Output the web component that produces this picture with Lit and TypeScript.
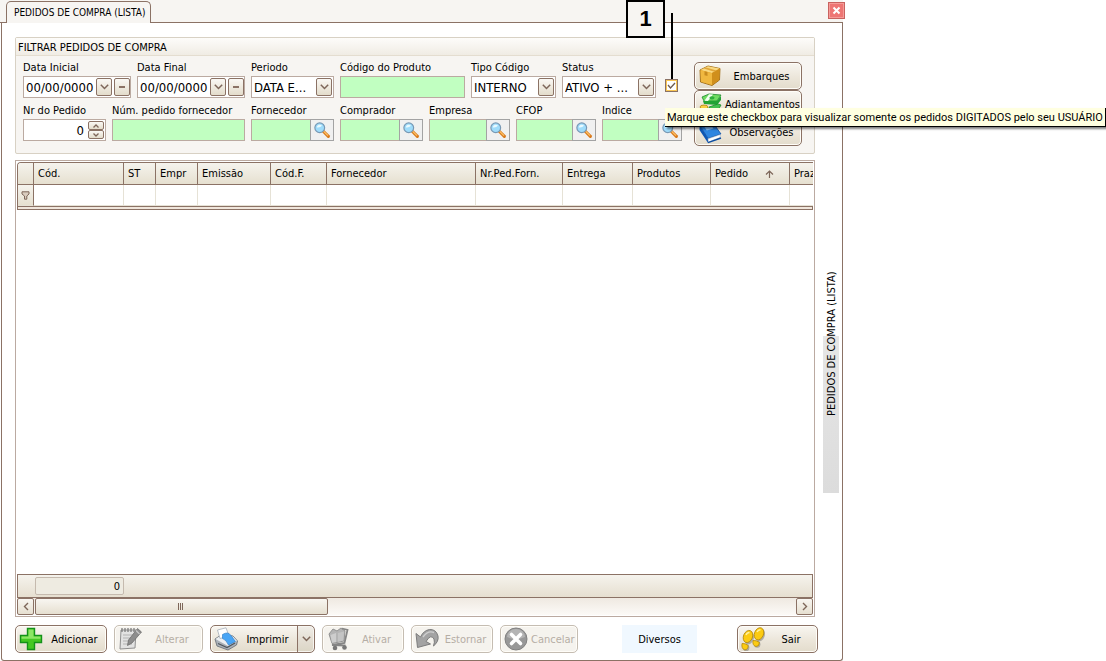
import { LitElement, html, css, svg } from "lit";
import { customElement, property } from "lit/decorators.js";

const icons: Record<string, unknown> = {
  box: svg`<path d="M2 6 L10 2 L22 4.500 L21.500 16 L14 21.500 L2.500 18Z" fill="#e3a12a" stroke="#9c6a14" stroke-width=".9"/><path d="M2.500 6 L10 2.300 L21.700 4.600 L14 9Z" fill="#f9d983"/><path d="M14 9 L21.700 4.600 L21.200 15.800 L14 21Z" fill="#d08f1c"/><path d="M2.500 6.300 L14 9.200 L14 21 L3 17.700Z" fill="#f0b840"/><path d="M5.700 4.500 L8 3.400 L18.500 6.400 L16.500 7.700Z" fill="#e0a63a"/><path d="M6.500 7.300 L9.500 8 L9.500 12 L6.500 11.200Z" fill="#c98c20"/>`,
  money: svg`<path d="M4 5 L11 2 L23 3 L19 9 L6 9Z" fill="#6fdc62" stroke="#1d8a2c" stroke-width=".8"/><path d="M5 9 L19 9 L23 4 L23 8 L19 13 L6 12Z" fill="#21a334"/><path d="M11 2.200 L15 2.500 L10 9 L6.500 8.800Z" fill="#f1fff0"/><ellipse cx="14" cy="5.800" rx="2.600" ry="1.600" fill="#2fae3d"/><path d="M11 15 L20 12 L23 13 L19 20 L12 20Z" fill="#43c24e" stroke="#1d8a2c" stroke-width=".8"/><g fill="#f9d040" stroke="#a9800f" stroke-width=".8"><ellipse cx="6" cy="20" rx="4" ry="2"/><ellipse cx="6" cy="17.500" rx="4" ry="2"/><ellipse cx="6" cy="15" rx="4" ry="2"/><ellipse cx="13" cy="21" rx="4" ry="2"/><ellipse cx="13" cy="18.500" rx="4" ry="2"/></g>`,
  book: svg`<path d="M1.500 5 L14 1.500 L23 14 L10 18.500Z" fill="#2f86e0" stroke="#0d4da0" stroke-width=".8"/><path d="M1.500 5 L10 18.500 L10 23 L1.500 10Z" fill="#0e57b4"/><path d="M10 18.800 L22.500 14.500 L22 17.500 L10.500 22Z" fill="#fff" stroke="#8fa6c4" stroke-width=".5"/><path d="M10 22.600 L23 18" stroke="#0d4da0" stroke-width="1.400"/><path d="M6.500 7 L13 5.200 L15.500 8.500 L8.800 10.500Z" fill="#8cc4fb"/>`,
  plus: svg`<path d="M8.500 1.500h7v7h7v7h-7v7h-7v-7h-7v-7h7z" fill="#45c823" stroke="#14911a" stroke-width="1.400"/><path d="M9.500 2.500h5v7h7v2.200H2.500V9.500h7z" fill="#a5f07c" opacity=".75"/>`,
  edit: svg`<path d="M3 3 L18 3 L17 21 L2 22Z" fill="#e2e2e2" stroke="#8f8f8f"/><path d="M4 1v4M7 1v4M10 1v4M13 1v4M16 1v4" stroke="#777" stroke-width="1.200"/><path d="M5 8h10M5 11h9M5 14h6M5 17h9" stroke="#b2b2b2"/><path d="M19.500 1.500 L23.500 5 L14 16 L9.500 18.500 L10.500 13Z" fill="#8d8d8d" stroke="#666" stroke-width=".7"/><path d="M18 3.500 L21.500 7" stroke="#c8c8c8" stroke-width="1.200"/>`,
  printer: svg`<path d="M1 12 L7 8 L19 9 L23.500 14 L22.500 18 L14 23 L3 19Z" fill="#aab1b9" stroke="#6e747b" stroke-width=".9"/><path d="M1.500 12 L7 8.500 L19 9.500 L23 14 L14 19Z" fill="#eceff2"/><path d="M3.500 3 L12 .8 L15 9 L6 11.500Z" fill="#fff" stroke="#a4adb8" stroke-width=".8"/><path d="M8.500 7.500 Q14 4 17 8.500 L21.500 14.500 L14.500 18 Q12 12.500 8.500 11.500Z" fill="#49a5f5" stroke="#2475c4" stroke-width=".6"/><path d="M4 16.500 L13 20.500 L21 16" fill="none" stroke="#50565c" stroke-width="1.200"/>`,
  cart: svg`<path d="M3 7 L7 2 L11 4 L15 1 L19 4 L18 14 L6 16.500Z" fill="#b4b4b4" stroke="#929292"/><path d="M4.500 8 L10 6 L10 15 L6 15.800Z" fill="#cdcdcd"/><path d="M12 6 L18 4.500 L17.300 13.500 L12 14.700Z" fill="#c4c4c4"/><path d="M16 1.500 L21.500 3 L18.500 16 L6 18 L19.500 18.500" fill="none" stroke="#858585" stroke-width="1.800"/><circle cx="9" cy="21" r="2.300" fill="#777"/><circle cx="18.500" cy="20.500" r="2.300" fill="#777"/>`,
  undo: svg`<path d="M1 6.500 L2.500 20.500 L15.500 17 L11 14.500 Q16 6.500 19 12 Q20 15 18.500 19 Q24 14.500 23 9 Q21 2 14.500 2.500 Q8.500 3.500 5.500 10Z" fill="#a3a3a3" stroke="#7c7c7c"/><path d="M8 10 Q13 3 19 5.500" fill="none" stroke="#cfcfcf" stroke-width="1.400"/>`,
  cancel: svg`<circle cx="12" cy="12" r="11" fill="#989898" stroke="#828282"/><path d="M3 10a9 8 0 0 1 18 0Q12 14 3 10" fill="#b4b4b4"/><path d="M7.500 7.500 16.500 16.500M16.500 7.500 7.500 16.500" stroke="#fff" stroke-width="3.600" stroke-linecap="round"/>`,
  feet: svg`<g fill="#666" opacity=".45" transform="translate(1.200 1.200)"><ellipse cx="7" cy="10" rx="4.500" ry="6.500" transform="rotate(22 7 10)"/><ellipse cx="18" cy="7" rx="4.500" ry="6.500" transform="rotate(22 18 7)"/><ellipse cx="4" cy="19.500" rx="3.200" ry="3.500"/><ellipse cx="15" cy="16" rx="3.200" ry="3.500"/></g><g fill="#fccb12" stroke="#b58a0a" stroke-width=".8"><ellipse cx="7" cy="9.500" rx="4.500" ry="6.300" transform="rotate(22 7 9.500)"/><ellipse cx="18" cy="6.800" rx="4.500" ry="6.300" transform="rotate(22 18 6.800)"/><path d="M1 16.500 Q4 16 7.200 18.500 Q7 22.800 3.800 22.800 Q.2 22 1 16.500Z"/><path d="M12 13.500 Q15 13 18.500 15.500 Q18.200 19.500 15 19.500 Q11.200 18.500 12 13.500Z"/></g><path d="M5 8 Q6 5.500 8.500 5.500M16 5 Q17 2.800 19.500 2.800" fill="none" stroke="#fff1a0" stroke-width="1.500"/>`,
  lens: svg`<path d="M14 14 L20.500 20.500" stroke="#d97a1c" stroke-width="4.200" stroke-linecap="round"/><path d="M14 13.500 L20 19.500" stroke="#ffc46b" stroke-width="1.600"/><circle cx="9" cy="9" r="6.500" fill="#9fdcfb" stroke="#7898b4" stroke-width="1.600"/><path d="M5 8.500a4 4 0 0 1 7-2.200Q9 9.500 5 8.500" fill="#e8f9ff"/>`,
};

const icon = (name: string, size = 24) =>
  html`<svg class="icon" width=${size} height=${size} viewBox="0 0 24 24" aria-hidden="true">${icons[name]}</svg>`;

const chevron = html`<svg width="9" height="6" viewBox="0 0 9 6" aria-hidden="true"><path d="M.8.8 4.500 4.500 8.200.8" fill="none" stroke="#7d6659" stroke-width="1.500"/></svg>`;

const shared = css`
  *, *::before, *::after { box-sizing: border-box; }
  :host { font: 11px/13px Tahoma, "DejaVu Sans Condensed", "DejaVu Sans", sans-serif; color: #000; }
  button, input, select { font: inherit; color: inherit; margin: 0; border-radius: 0; }
  svg { display: block; flex: none; }
`;

@customElement("tool-button")
class ToolButton extends LitElement {
  @property() icon = "";
  @property() label = "";
  @property({ type: Boolean }) off = false;
  @property({ type: Boolean }) split = false;

  static styles = [shared, css`
    :host { display: block; min-width: 0; }
    .frame {
      display: flex; width: 100%; height: 28px; border: 1px solid #8b7265; border-radius: 5px;
      background: linear-gradient(#f8f6f1, #ece6da 55%, #e3dccc); box-shadow: inset 0 0 0 1px #fffdf8;
    }
    .main { flex: 1; min-width: 0; display: flex; align-items: center; padding: 0 3px; border: 0; background: none; }
    .text { flex: 1; text-align: center; white-space: nowrap; padding-left: 3px; }
    .more { width: 17px; padding: 0; border: 0; border-left: 1px solid #8b7265; background: #00000008; display: grid; place-items: center; }
    .off { border-color: #c5bdb2; background: #f5f3ee; }
    .off .text { color: #b5aea5; }
  `];

  render() {
    return html`<div class="frame ${this.off ? "off" : ""}">
      <button class="main" ?disabled=${this.off}>${icon(this.icon)}<span class="text">${this.label}</span></button>
      ${this.split ? html`<button class="more" aria-label="Mais opções">${chevron}</button>` : ""}
    </div>`;
  }
}

type Kind = "date" | "select" | "text" | "number" | "search";

@customElement("filter-field")
class FilterField extends LitElement {
  @property() label = "";
  @property() kind: Kind = "text";
  @property() value = "";

  static styles = [shared, css`
    :host { display: flex; flex-direction: column; gap: 2px; min-width: 0; }
    label { white-space: nowrap; }
    .box { display: flex; align-items: center; gap: 2px; height: 22px; border: 1px solid #bbaaa1; background: #fff; }
    .entry { flex: 1; width: 0; min-width: 0; height: 20px; border: 0; padding: 0 0 0 2px; background: none; outline: 0; font-size: 13px; }
    .green { background: #c1ffc1; }
    .number { text-align: right; padding-right: 2px; }
    .mini { width: 16px; height: 18px; padding: 0; display: grid; place-items: center; border: 1px solid #8b7265; border-radius: 2px; background: linear-gradient(#faf8f4, #e3dccb); }
    .minus::before { content: ""; width: 6px; height: 2px; background: #8b7265; }
    .pick { display: grid; grid-template-columns: minmax(0, 1fr) 16px; padding-right: 1px; }
    .pick select { grid-area: 1 / 1 / 2 / 3; width: 100%; appearance: none; }
    .pick .mini { grid-area: 1 / 2; pointer-events: none; }
    .spin { display: flex; flex-direction: column; padding-right: 1px; }
    .spin .mini { height: 9px; }
    .spin .up svg { transform: rotate(180deg); }
    .lens { align-self: stretch; width: 24px; margin: -1px; padding: 0; display: grid; place-items: center; border: 1px solid #a3a3a3; background: #f0f0f0; }
  `];

  private body() {
    const v = this.value;
    const small = html`<svg width="6" height="4" viewBox="0 0 6 4" aria-hidden="true"><path d="M.5.5 3 3 5.500.5" fill="none" stroke="#7d6659" stroke-width="1.300"/></svg>`;
    switch (this.kind) {
      case "date":
        return html`<div class="box"><input id="f" class="entry" .value=${v} />
          <button class="mini" aria-label="Abrir calendário">${chevron}</button>
          <button class="mini minus" aria-label="Limpar"></button></div>`;
      case "select":
        return html`<div class="box pick"><select id="f" class="entry"><option>${v}</option></select><span class="mini">${chevron}</span></div>`;
      case "number":
        return html`<div class="box"><input id="f" class="entry number" .value=${v} />
          <div class="spin"><button class="mini up" aria-label="Aumentar">${small}</button><button class="mini" aria-label="Diminuir">${small}</button></div></div>`;
      case "search":
        return html`<div class="box green"><input id="f" class="entry" /><button class="lens" aria-label="Pesquisar">${icon("lens", 18)}</button></div>`;
      default:
        return html`<div class="box green"><input id="f" class="entry" /></div>`;
    }
  }

  render() {
    return html`<label for="f">${this.label}</label>${this.body()}`;
  }
}

const columns: [string, number][] = [
  ["Cód.", 90], ["ST", 32], ["Empr", 42], ["Emissão", 73], ["Cód.F.", 56], ["Fornecedor", 149],
  ["Nr.Ped.Forn.", 87], ["Entrega", 70], ["Produtos", 78], ["Pedido", 79], ["Praz", 24],
];

@customElement("order-grid")
class OrderGrid extends LitElement {
  static styles = [shared, css`
    :host { flex: 1; display: flex; flex-direction: column; border: 1px solid #bbaaa1; padding: 1px; background: #fff; }
    table { width: 100%; table-layout: fixed; border-spacing: 0; border: 1px solid #8b7265; border-right: 0; border-bottom: 0; border-top-left-radius: 4px; }
    th, td { padding: 0; overflow: hidden; white-space: nowrap; text-align: left; font-weight: normal; }
    th { height: 22px; padding: 0 0 0 4px; border-right: 1px solid #8b7265; border-bottom: 1px solid #8b7265; background: linear-gradient(#f5f3ed, #e6e0d0); }
    td { height: 21px; border-right: 1px solid #e6e2d6; border-bottom: 1px solid #e6e2d6; }
    th:last-child, td:last-child { border-right: 0; }
    th:first-child { border-top-left-radius: 3px; }
    .mark { padding: 0 0 0 3px; border-right-color: #8b7265; background: linear-gradient(#f5f3ed, #e6e0d0); }
    .head { display: flex; justify-content: space-between; align-items: center; }
    .sort { margin-right: 15px; }
    .split { height: 4px; border: 1px solid #8b7265; background: #f0e6dc; }
    .rows { flex: 1; }
    .total { height: 24px; border: 1px solid #8b7265; padding: 2px 17px; background: linear-gradient(#f5f3ed, #e6dfd0); }
    .sum { display: block; width: 89px; height: 18px; border: 1px solid #c5baae; border-radius: 2px; padding: 2px 3px; text-align: right; background: #eeebe1; }
    .scroll { display: flex; gap: 1px; height: 17px; background: linear-gradient(#efe9e1, #fcfaf7); }
    .step, .thumb { padding: 0; display: grid; place-items: center; border: 1px solid #8b7265; border-radius: 2px; background: linear-gradient(#f8f6f1, #e6dfd0); }
    .step { width: 17px; }
    .thumb { width: 38.500%; }
    .track { flex: 1; display: flex; }
  `];

  render() {
    return html`
      <table>
        <colgroup><col style="width:16px" />${columns.map(([, w], i) => i < columns.length - 1 ? html`<col style="width:${w}px" />` : html`<col />`)}</colgroup>
        <thead><tr><th></th>${columns.map(([name]) => html`<th><div class="head">${name}${name === "Pedido"
          ? html`<svg class="sort" width="9" height="8" viewBox="0 0 9 8" aria-hidden="true"><path d="M4.500 8V1.500M1 4.500l3.500-3.500L8 4.500" fill="none" stroke="#7d6659" stroke-width="1.200"/></svg>` : ""}</div></th>`)}</tr></thead>
        <tbody><tr><td class="mark"><svg width="9" height="9" viewBox="0 0 9 9" aria-hidden="true"><path d="M1 .8h7v2.200L5.800 5v3.200H3.500V5L1 3z" fill="#d9ccbe" stroke="#7d6659"/></svg></td>${columns.map(() => html`<td></td>`)}</tr></tbody>
      </table>
      <div class="split"></div>
      <div class="rows"></div>
      <div class="total"><output class="sum">0</output></div>
      <div class="scroll">
        <button class="step" aria-label="Rolar para a esquerda"><svg width="6" height="9" viewBox="0 0 6 9"><path d="M5 1 1.500 4.500 5 8" fill="none" stroke="#7d6659" stroke-width="1.400"/></svg></button>
        <div class="track"><button class="thumb" aria-label="Barra de rolagem"><svg width="6" height="7" viewBox="0 0 6 7"><path d="M.5 0v7M2.500 0v7M4.500 0v7" stroke="#7d6659"/></svg></button></div>
        <button class="step" aria-label="Rolar para a direita"><svg width="6" height="9" viewBox="0 0 6 9"><path d="M1 1l3.500 3.500L1 8" fill="none" stroke="#7d6659" stroke-width="1.400"/></svg></button>
      </div>`;
  }
}

@customElement("app-root")
class AppRoot extends LitElement {
  static styles = [shared, css`
    :host { display: grid; grid-template-columns: minmax(0, 1fr) 263px; min-height: 100vh; background: #fff; }
    .window { display: flex; flex-direction: column; }
    .strip { display: flex; justify-content: space-between; height: 23px; padding: 1px 0 0 6px; background: #f7f5f2; box-shadow: inset 0 -1px #8b7265; }
    .tab { height: 22px; padding: 0 5px 0 7px; border: 1px solid #8b7265; border-bottom: 0; border-radius: 5px 5px 0 0; background: #f7f5f2; font-size: 10px; }
    .close { width: 17px; height: 17px; margin: 1px -2px 0 0; padding: 0; display: grid; place-items: center; border: 1px solid #c9625f; background: #ee7674; box-shadow: inset 0 0 0 1px #f59b98; }
    .body { flex: 1; display: grid; grid-template-columns: minmax(0, 1fr) 16px; gap: 8px; margin-left: 1px; padding: 14px 3px 7px 13px; border: 1px solid #8b7265; border-top: 0; border-radius: 0 0 3px 3px; }
    .main { display: flex; flex-direction: column; gap: 6px; }
    fieldset { margin: 0; padding: 0; min-width: 0; border: 1px solid #d8d1c4; border-radius: 2px; background: #f7f5f2; }
    .title { height: 18px; padding: 3px 2px 0; line-height: 13px; border-bottom: 1px solid #e4ddd0; background: linear-gradient(#fdfcfa, #f0ece4); }
    .filters { display: flex; gap: 12px; padding: 5px 12px 7px 7px; }
    .fields { flex: 1; min-width: 0; display: grid; gap: 6px; align-content: start; }
    .row { display: grid; gap: 6px; }
    .first { grid-template-columns: 108fr 108fr 83fr 125fr 85fr 94fr 20fr; }
    .second { grid-template-columns: 83fr 133fr 83fr 83fr 81fr 80fr 80fr; }
    .shortcuts { width: 108px; padding-top: 1px; }
    .check { align-self: end; padding: 0 0 6px 3px; }
    .anchor { position: relative; display: grid; width: 13px; height: 13px; }
    .anchor input, .tick { grid-area: 1 / 1; }
    .anchor input { width: 13px; height: 13px; appearance: none; border: 1px solid #8b7265; background: #fff; box-shadow: inset 0 0 0 1px #f9c655; }
    .tick { place-self: center; pointer-events: none; }
    .leader { position: absolute; left: 6px; bottom: 13px; width: 2px; height: 66px; background: #000; }
    .number { position: absolute; left: -39px; top: -79px; width: 39px; height: 38px; display: grid; place-items: center; border: 2px solid #000; background: #f7f5f2; font: bold 22px "Liberation Sans", sans-serif; }
    .tip { position: absolute; z-index: 5; left: 0; top: 29px; height: 19px; padding: 3px 2px 0; white-space: nowrap; background: #ffffe1; border: solid #000; border-width: 0 1px 1px 0; box-shadow: 2px 2px 2px #00000080; font-family: Tahoma, Roboto, sans-serif; }
    .actions { display: flex; gap: 7px; margin: 2px -3px 0 0; align-items: center; }
    .w92 { width: 92px; } .w89 { width: 89px; } .w105 { width: 105px; } .w82 { width: 82px; } .w78 { width: 78px; } .w81 { width: 81px; }
    .misc { margin: 0 33px 0 auto; width: 75px; height: 28px; border: 0; padding: 0; background: #f0f8ff; }
    .side { display: flex; flex-direction: column; align-items: center; padding-top: 74px; justify-content: center; }
    .rail { height: 222px; width: 16px; padding: 0; border: 0; writing-mode: vertical-rl; transform: rotate(180deg); text-align: right; white-space: nowrap; background: linear-gradient(#dcdcdc, #e6e6e6) no-repeat top / 100% 157px; }
  `];

  render() {
    return html`
      <div class="window">
        <header class="strip">
          <button class="tab">PEDIDOS DE COMPRA (LISTA)</button>
          <button class="close" aria-label="Fechar"><svg width="9" height="9" viewBox="0 0 9 9"><path d="M1.500 1.500l6 6M7.500 1.500l-6 6" stroke="#fff" stroke-width="2"/></svg></button>
        </header>
        <div class="body">
          <main class="main">
            <fieldset aria-labelledby="filter-title">
              <div class="title" id="filter-title">FILTRAR PEDIDOS DE COMPRA</div>
              <div class="filters">
                <div class="fields">
                  <div class="row first">
                    <filter-field label="Data Inicial" kind="date" value="00/00/0000"></filter-field>
                    <filter-field label="Data Final" kind="date" value="00/00/0000"></filter-field>
                    <filter-field label="Periodo" kind="select" value="DATA E..."></filter-field>
                    <filter-field label="Código do Produto"></filter-field>
                    <filter-field label="Tipo Código" kind="select" value="INTERNO"></filter-field>
                    <filter-field label="Status" kind="select" value="ATIVO + ..."></filter-field>
                    <div class="check"><div class="anchor">
                      <input type="checkbox" checked aria-labelledby="own-tip" />
                      <svg class="tick" width="9" height="9" viewBox="0 0 9 9" aria-hidden="true"><path d="M1 4l2.500 3L8 2" fill="none" stroke="#6b5a50" stroke-width="1.300"/></svg>
                      <span class="leader"></span>
                      <span class="number">1</span>
                      <span class="tip" id="own-tip" role="tooltip">Marque este checkbox para visualizar somente os pedidos DIGITADOS pelo seu USUÁRIO</span>
                    </div></div>
                  </div>
                  <div class="row second">
                    <filter-field label="Nr do Pedido" kind="number" value="0"></filter-field>
                    <filter-field label="Núm. pedido fornecedor"></filter-field>
                    ${["Fornecedor", "Comprador", "Empresa", "CFOP", "Indice"].map((l) => html`<filter-field label=${l} kind="search"></filter-field>`)}
                  </div>
                </div>
                <div class="shortcuts">
                  <tool-button icon="box" label="Embarques"></tool-button>
                  <tool-button icon="money" label="Adiantamentos"></tool-button>
                  <tool-button icon="book" label="Observações"></tool-button>
                </div>
              </div>
            </fieldset>
            <order-grid></order-grid>
            <footer class="actions">
              <tool-button class="w92" icon="plus" label="Adicionar"></tool-button>
              <tool-button class="w89" icon="edit" label="Alterar" off></tool-button>
              <tool-button class="w105" icon="printer" label="Imprimir" split></tool-button>
              <tool-button class="w82" icon="cart" label="Ativar" off></tool-button>
              <tool-button class="w82" icon="undo" label="Estornar" off></tool-button>
              <tool-button class="w78" icon="cancel" label="Cancelar" off></tool-button>
              <button class="misc">Diversos</button>
              <tool-button class="w81" icon="feet" label="Sair"></tool-button>
            </footer>
          </main>
          <aside class="side"><button class="rail">PEDIDOS DE COMPRA (LISTA)</button></aside>
        </div>
      </div>`;
  }
}
